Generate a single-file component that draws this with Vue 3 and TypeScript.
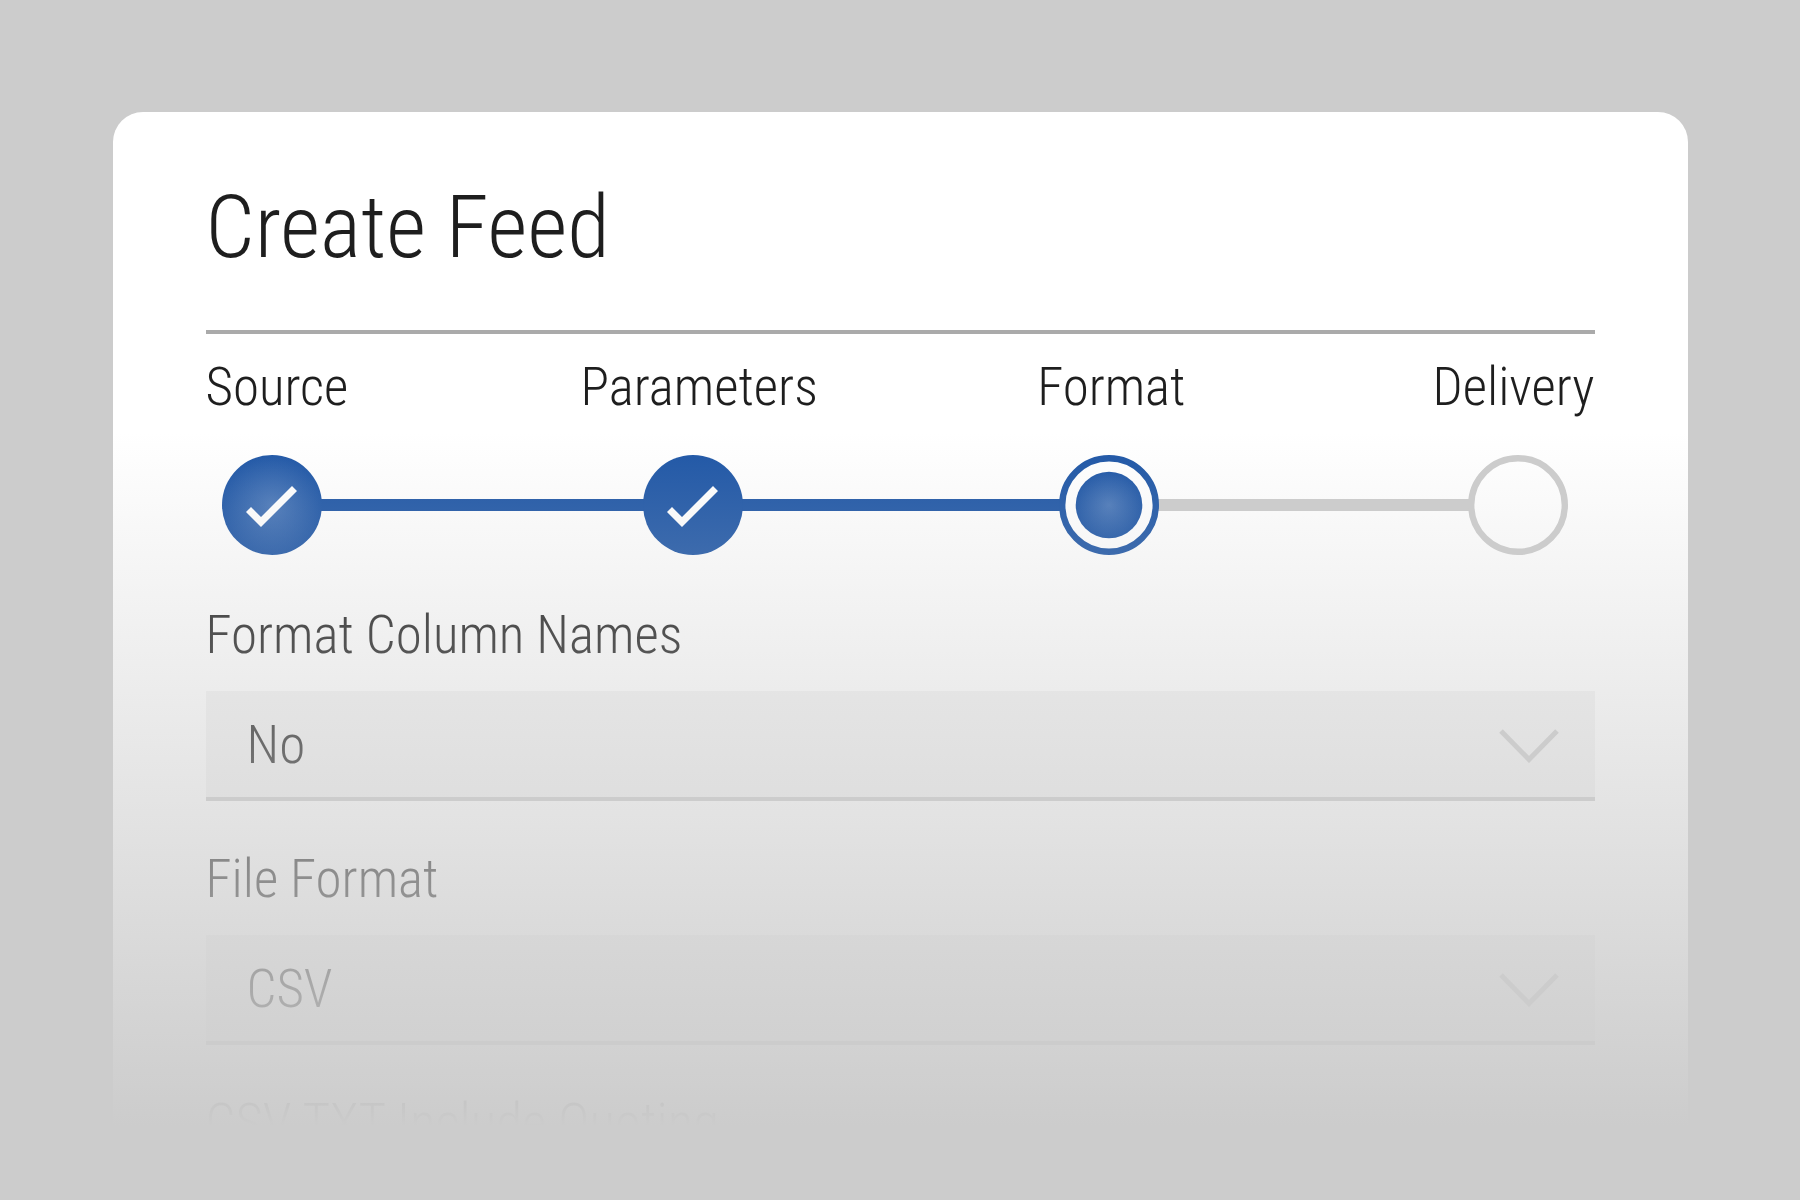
<script setup lang="ts">
import { reactive } from 'vue'

type StepState = 'done' | 'current' | 'pending'

interface Step {
  name: string
  state: StepState
  glow?: boolean
}

interface Field {
  id: string
  label: string
  value: string
  options: string[]
}

const steps: Step[] = [
  { name: 'Source', state: 'done', glow: true },
  { name: 'Parameters', state: 'done' },
  { name: 'Format', state: 'current' },
  { name: 'Delivery', state: 'pending' },
]

const fields = reactive<Field[]>([
  { id: 'column-names', label: 'Format Column Names', value: 'No', options: ['No', 'Yes'] },
  { id: 'file-format', label: 'File Format', value: 'CSV', options: ['CSV', 'TXT'] },
])
</script>

<template>
  <main class="page">
    <section class="card">
      <h1 class="title">Create Feed</h1>

      <ol class="labels">
        <li
          v-for="(step, i) in steps"
          :key="step.name"
          :class="`label-${i + 1}`"
          :aria-current="step.state === 'current' ? 'step' : undefined"
        >
          {{ step.name }}
        </li>
      </ol>

      <div class="track" aria-hidden="true">
        <template v-for="(step, i) in steps" :key="step.name">
          <span v-if="i > 0" class="line" :class="[`line-${i}`, { reached: step.state !== 'pending' }]"></span>
          <svg class="marker" viewBox="0 0 100 100">
            <defs>
              <radialGradient :id="`glow-${i}`">
                <stop offset="0" stop-color="#4a78b9" />
                <stop offset="1" stop-color="#1e56a6" />
              </radialGradient>
            </defs>
            <template v-if="step.state === 'done'">
              <circle cx="50" cy="50" r="50" :fill="step.glow ? `url(#glow-${i})` : '#1e56a6'" />
              <path d="M24 57l5-5 10 10 31-31 5 5-36 36z" fill="#fff" />
            </template>
            <template v-else-if="step.state === 'current'">
              <circle cx="50" cy="50" r="46.8" fill="#fff" stroke="#1e56a6" stroke-width="6.4" />
              <circle cx="50" cy="50" r="33.3" :fill="`url(#glow-${i})`" />
            </template>
            <circle v-else cx="50" cy="50" r="46.8" fill="#fff" stroke="#ccc" stroke-width="6.4" />
          </svg>
        </template>
      </div>

      <form class="form" @submit.prevent>
        <div v-for="field in fields" :key="field.id" class="field">
          <label :for="field.id">{{ field.label }}</label>
          <div class="control">
            <select :id="field.id" v-model="field.value">
              <option v-for="option in field.options" :key="option">{{ option }}</option>
            </select>
            <svg class="chevron" viewBox="0 0 60 34" aria-hidden="true">
              <path d="M2 2l28 28.500 28-28.500" fill="none" stroke="#ccc" stroke-width="5" />
            </svg>
          </div>
        </div>
        <p class="next-label">CSV TXT Include Quoting</p>
      </form>
    </section>
  </main>
</template>

<style>
body {
  margin: 0;
  background: #ccc;
}
</style>

<style scoped>
.page {
  box-sizing: border-box;
  min-height: 100vh;
  padding: 112px 6.25% 0;
  background: #ccc;
  color: #1e1e1e;
  font-family: "Roboto Condensed", "Liberation Sans Narrow", "Liberation Sans", sans-serif;
  font-size: 53px;
  font-weight: 350;
  line-height: 64px;
}

.card {
  position: relative;
  padding: 0 93px;
  overflow: hidden;
  border-radius: 30px 30px 0 0;
  background: #fff;
}

/* Fades the lower part of the card into the page */
.card::after {
  content: "";
  position: absolute;
  z-index: 2;
  inset: 0;
  background: linear-gradient(rgba(204, 204, 204, 0) 320px, #ccc 1014px);
  pointer-events: none;
}

.title {
  margin: 0;
  padding: 63px 0 51px;
  border-bottom: 4px solid #aaa;
  font-size: 87px;
  font-weight: inherit;
  line-height: 104px;
}

.labels {
  display: grid;
  grid-template-columns: auto 235fr auto 222fr auto 250fr auto;
  margin: 0;
  padding: 21px 0 0;
  list-style: none;
}

.label-1 {
  grid-column: 1;
}

.label-2 {
  grid-column: 3;
}

.label-3 {
  grid-column: 5;
}

.label-4 {
  grid-column: 7;
}

.track {
  display: flex;
  align-items: center;
  margin: 36px 27px 0 16px;
}

.marker {
  position: relative;
  flex: none;
  width: 100px;
  height: 100px;
}

.line {
  height: 12px;
  margin: 0 -2px;
  background: #ccc;
}

.line.reached {
  background: #1e56a6;
}

.line-1 {
  flex: 321;
}

.line-2 {
  flex: 316;
}

.line-3 {
  flex: 309;
}

.form {
  padding-top: 48px;
}

.field {
  margin-bottom: 46px;
}

.field label {
  display: block;
  margin-bottom: 24px;
}

.control {
  position: relative;
}

.control select {
  display: block;
  box-sizing: border-box;
  width: 100%;
  height: 110px;
  padding: 2px 100px 0 41px;
  appearance: none;
  border: 0;
  border-bottom: 4px solid #ccc;
  border-radius: 0;
  background: #f3f3f3;
  color: inherit;
  font: inherit;
}

.chevron {
  position: absolute;
  top: 38px;
  right: 36px;
  width: 60px;
  height: 34px;
  pointer-events: none;
}

.next-label {
  margin: 0;
}
</style>
